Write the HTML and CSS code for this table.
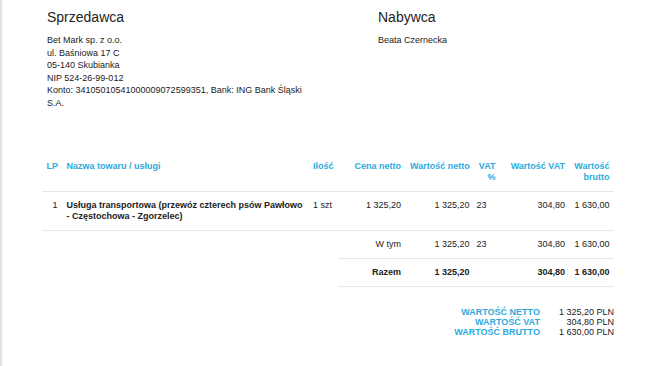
FILE: index.html
```html
<!DOCTYPE html>
<html lang="pl">
<head>
<meta charset="utf-8">
<title>Faktura</title>
<link rel="stylesheet" href="styles.css">
</head>
<body>
<div class="page">
  <div class="parties">
    <div class="party">
      <h2 class="party-title">Sprzedawca</h2>
      <div class="party-body">
        <div>Bet Mark sp. z o.o.</div>
        <div>ul. Baśniowa 17 C</div>
        <div>05-140 Skubianka</div>
        <div>NIP 524-26-99-012</div>
        <div>Konto: 34105010541000009072599351, Bank: ING Bank Śląski S.A.</div>
      </div>
    </div>
    <div class="party">
      <h2 class="party-title">Nabywca</h2>
      <div class="party-body">
        <div>Beata Czernecka</div>
      </div>
    </div>
  </div>

  <table class="items">
    <colgroup>
      <col class="c-lp"><col class="c-name"><col class="c-qty"><col class="c-price"><col class="c-net"><col class="c-vatp"><col class="c-vat"><col class="c-gross">
    </colgroup>
    <thead>
      <tr>
        <th class="r">LP</th>
        <th class="l">Nazwa towaru / usługi</th>
        <th class="l">Ilość</th>
        <th class="r">Cena netto</th>
        <th class="r nw">Wartość netto</th>
        <th class="r">VAT %</th>
        <th class="r">Wartość VAT</th>
        <th class="r">Wartość brutto</th>
      </tr>
    </thead>
    <tbody>
      <tr class="line">
        <td class="r">1</td>
        <td class="l b">Usługa transportowa (przewóz czterech psów Pawłowo - Częstochowa - Zgorzelec)</td>
        <td class="l">1 szt</td>
        <td class="r">1 325,20</td>
        <td class="r">1 325,20</td>
        <td class="vatp">23</td>
        <td class="r">304,80</td>
        <td class="r nw">1 630,00</td>
      </tr>
      <tr class="sum">
        <td class="blank"></td>
        <td class="blank"></td>
        <td class="blank"></td>
        <td class="r">W tym</td>
        <td class="r">1 325,20</td>
        <td class="vatp">23</td>
        <td class="r">304,80</td>
        <td class="r nw">1 630,00</td>
      </tr>
      <tr class="sum total">
        <td class="blank"></td>
        <td class="blank"></td>
        <td class="blank"></td>
        <td class="r">Razem</td>
        <td class="r">1 325,20</td>
        <td class="vatp"></td>
        <td class="r">304,80</td>
        <td class="r nw">1 630,00</td>
      </tr>
    </tbody>
  </table>

  <div class="totals">
    <div class="t-label">WARTOŚĆ NETTO</div><div class="t-value">1 325,20 PLN</div>
    <div class="t-label">WARTOŚĆ VAT</div><div class="t-value">304,80 PLN</div>
    <div class="t-label">WARTOŚĆ BRUTTO</div><div class="t-value">1 630,00 PLN</div>
  </div>
</div>
</body>
</html>
```

FILE: styles.css
```css
html, body {
  margin: 0;
  padding: 0;
  background: #ffffff;
}
body {
  font-family: "Liberation Sans", Arial, Helvetica, sans-serif;
  color: #222222;
  font-size: 9px;
  min-height: 366px;
  border-left: 2px solid #e3e3e3;
  box-sizing: border-box;
}
.page {
  padding: 9px 0 0 40px;
  width: 572px;
}
.parties {
  display: grid;
  grid-template-columns: 266px 1fr;
  column-gap: 65px;
  padding: 0 5px;
}
.party-title {
  margin: 0 0 9px 0;
  font-size: 14px;
  line-height: 16px;
  font-weight: normal;
  color: #1e1e1e;
}
.party-body {
  line-height: 12.5px;
}
.items {
  margin-top: 44px;
  width: 572px;
  table-layout: fixed;
  border-collapse: collapse;
  font-size: 9px;
  line-height: 11px;
}
.c-lp { width: 20px; }
.c-name { width: 246.5px; }
.c-qty { width: 29.5px; }
.c-price { width: 67.5px; }
.c-net { width: 68.5px; }
.c-vatp { width: 26px; }
.c-vat { width: 69.5px; }
.c-gross { width: 44.5px; }
.items th, .items td {
  padding: 8px 4.5px;
  vertical-align: top;
}
.items th {
  color: #2eaadc;
  font-weight: bold;
  border-bottom: 1px solid #e6e6e6;
}
.items td {
  border-bottom: 1px solid #e6e6e6;
}
.items td.blank {
  border-bottom: none;
}
.r { text-align: right; }
.l { text-align: left; }
.b { font-weight: bold; }
.nw { white-space: nowrap; }
.items td.vatp {
  text-align: left;
  padding-left: 2.5px;
}
.total td {
  font-weight: bold;
}
.totals {
  margin-top: 20px;
  display: grid;
  grid-template-columns: auto auto;
  justify-content: end;
  column-gap: 19px;
  font-size: 9px;
  line-height: normal;
}
.t-label {
  text-align: right;
  color: #2eaadc;
  font-weight: bold;
}
.t-value {
  text-align: right;
}
```
